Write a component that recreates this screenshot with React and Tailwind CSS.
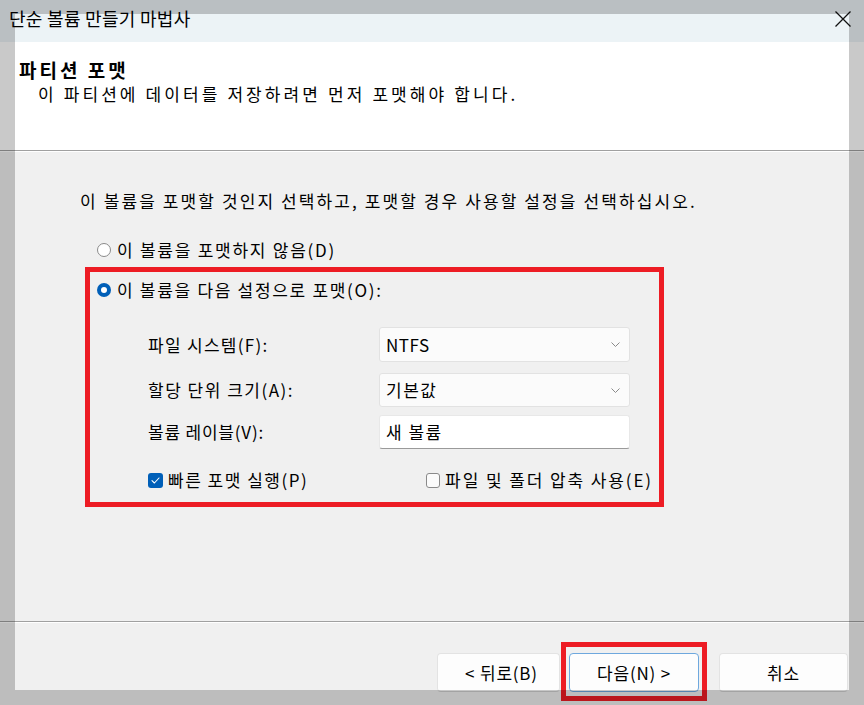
import React from "react";

function Radio({ checked }) {
  if (checked) {
    return (
      <span className="w-[14px] h-[14px] rounded-full bg-[#005fb8] flex items-center justify-center shrink-0">
        <span className="w-[6px] h-[6px] rounded-full bg-white" />
      </span>
    );
  }
  return <span className="w-[14px] h-[14px] rounded-full border border-[#8a8a8a] bg-white shrink-0" />;
}

function Checkbox({ checked }) {
  if (checked) {
    return (
      <span className="w-[15px] h-[15px] rounded-[3px] bg-[#005fb8] flex items-center justify-center shrink-0">
        <svg width="9" height="7" viewBox="0 0 9 7" fill="none">
          <path d="M1 3.6 L3.4 6 L8 1" stroke="white" strokeWidth="1.1" strokeLinecap="round" strokeLinejoin="round" />
        </svg>
      </span>
    );
  }
  return <span className="w-[14px] h-[15px] rounded-[3px] border border-[#8a8a8a] bg-[#fbfbfb] shrink-0" />;
}

function Chevron() {
  return (
    <svg width="9" height="5" viewBox="0 0 9 5" fill="none">
      <path d="M0.5 0.5 L4.5 4.5 L8.5 0.5" stroke="#8a8a8a" strokeWidth="1" />
    </svg>
  );
}

export default function App() {
  return (
    <div className="relative w-[864px] h-[705px] overflow-hidden bg-[#f0f0f0] text-black font-['Noto_Sans_CJK_KR','Noto_Sans',sans-serif]">
      {/* Title bar */}
      <div className="h-[42px] bg-[#ecf3f6] flex items-start justify-between pl-[9px] pr-[13px] pt-[4px]">
        <span className="text-[18px] leading-[28px] tracking-[0.3px]">단순 볼륨 만들기 마법사</span>
        <svg width="16" height="16" viewBox="0 0 16 16" className="mt-[7px]" fill="none">
          <path d="M0.5 0.5 L15.5 15.5 M15.5 0.5 L0.5 15.5" stroke="#111" strokeWidth="1.3" />
        </svg>
      </div>

      {/* Header */}
      <div className="h-[108px] bg-white pl-[19px] pt-[16px]">
        <div className="text-[19px] font-bold leading-[24px] tracking-[3px]">파티션 포맷</div>
        <div className="text-[17px] leading-[23px] pl-[19px] tracking-[3.1px]">이 파티션에 데이터를 저장하려면 먼저 포맷해야 합니다.</div>
      </div>
      <div className="h-[1px] bg-[#a0a0a0]" />
      <div className="h-[1px] bg-white" />

      {/* Content */}
      <div className="h-[469px] flex flex-col text-[17px] tracking-[1.5px]">
        <div className="pl-[80px] pt-[37px] leading-[24px] tracking-[2.1px]">
          이 볼륨을 포맷할 것인지 선택하고, 포맷할 경우 사용할 설정을 선택하십시오.
        </div>
        <div className="mt-[25px] pl-[97px] h-[24px] flex items-center gap-[6px] tracking-[1.75px]">
          <Radio />
          <span>이 볼륨을 포맷하지 않음(D)</span>
        </div>

        <div className="mt-[5px] ml-[85px] w-[579px] h-[240px] border-[5px] border-[#ed1c24] flex flex-col">
          <div className="mt-[6px] pl-[7px] h-[24px] flex items-center gap-[6px] tracking-[1.7px]">
            <Radio checked />
            <span>이 볼륨을 다음 설정으로 포맷(O):</span>
          </div>

          <div className="mt-[25px] pl-[58px] flex items-center">
            <span className="w-[231px] tracking-[1.3px]">파일 시스템(F):</span>
            <div className="w-[251px] h-[35px] bg-[#fbfbfb] border border-[#e2e2e2] rounded-[3px] flex items-center justify-between pl-[6px] pr-[9px]">
              <span className="tracking-[0.5px]">NTFS</span>
              <Chevron />
            </div>
          </div>

          <div className="mt-[11px] pl-[58px] flex items-center">
            <span className="w-[231px]">할당 단위 크기(A):</span>
            <div className="w-[251px] h-[34px] bg-[#fbfbfb] border border-[#e2e2e2] rounded-[3px] flex items-center justify-between pl-[6px] pr-[9px]">
              <span>기본값</span>
              <Chevron />
            </div>
          </div>

          <div className="mt-[8px] pl-[58px] flex items-center">
            <span className="w-[231px] tracking-[0.8px]">볼륨 레이블(V):</span>
            <div className="w-[251px] h-[34px] bg-white border border-[#e8e8e8] border-b-[#9a9a9a] rounded-[3px] flex items-center pl-[6px]">
              <span>새 볼륨</span>
            </div>
          </div>

          <div className="mt-[19px] pl-[58px] pr-[6px] h-[24px] flex items-center justify-between">
            <div className="flex items-center gap-[5px]">
              <Checkbox checked />
              <span>빠른 포맷 실행(P)</span>
            </div>
            <div className="flex items-center gap-[5px] tracking-[1.9px]">
              <Checkbox />
              <span>파일 및 폴더 압축 사용(E)</span>
            </div>
          </div>
        </div>
      </div>

      <div className="h-[1px] bg-[#a0a0a0]" />
      <div className="h-[1px] bg-white" />

      {/* Footer */}
      <div className="h-[82px] flex justify-end items-start pt-[30px] pr-[16px] text-[17px] tracking-[0.8px]">
        <button className="w-[123px] h-[39px] bg-[#fdfdfd] border border-[#e3e3e3] border-b-[#cfcfcf] rounded-[4px] flex items-center justify-center pl-[6px]">
          &lt; 뒤로(B)
        </button>
        <button className="ml-[9px] w-[130px] h-[39px] bg-[#fdfdfd] border border-[#6ea8de] rounded-[4px] flex items-center justify-center">
          다음(N) &gt;
        </button>
        <button className="ml-[20px] w-[129px] h-[39px] bg-[#fdfdfd] border border-[#e3e3e3] border-b-[#cfcfcf] rounded-[4px] flex items-center justify-center">
          취소
        </button>
      </div>

      {/* Annotation box around Next button */}
      <div className="absolute left-[561px] top-[642px] w-[146px] h-[59px] border-[5px] border-[#ed1c24] pointer-events-none" />

      {/* Dim overlay around the window */}
      <div className="absolute left-[15px] top-[14px] w-[834px] h-[676px] shadow-[0_0_0_2000px_rgba(0,0,0,0.21)] pointer-events-none" />
    </div>
  );
}
